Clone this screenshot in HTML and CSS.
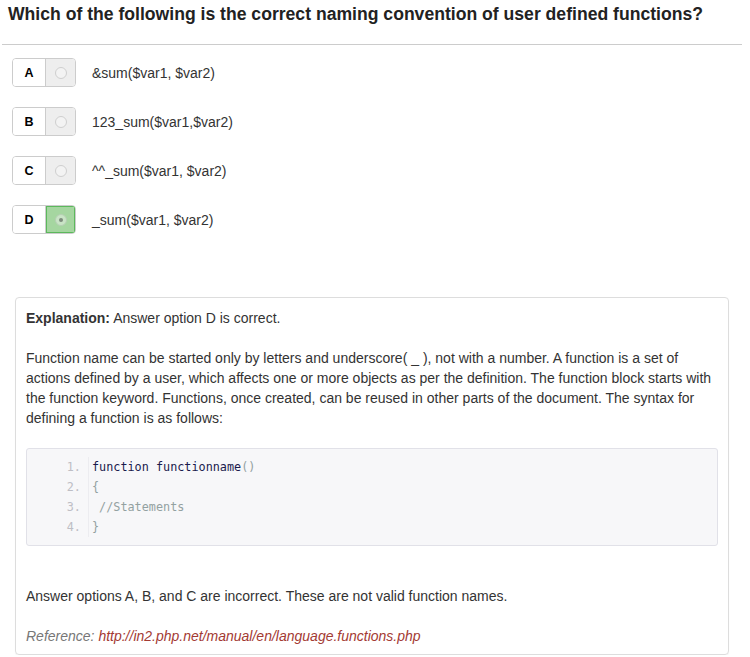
FILE: index.html
```html
<!DOCTYPE html>
<html>
<head>
<meta charset="utf-8">
<link rel="stylesheet" href="styles.css">
</head>
<body>
<div class="page">
  <h3 class="question">Which of the following is the correct naming convention of user defined functions?</h3>
  <hr class="rule">
  <ul class="options">
    <li class="option">
      <span class="btn-group"><span class="letter">A</span><span class="radio-box"><span class="radio"></span></span></span>
      <span class="option-text">&amp;sum($var1, $var2)</span>
    </li>
    <li class="option">
      <span class="btn-group"><span class="letter">B</span><span class="radio-box"><span class="radio"></span></span></span>
      <span class="option-text">123_sum($var1,$var2)</span>
    </li>
    <li class="option">
      <span class="btn-group"><span class="letter">C</span><span class="radio-box"><span class="radio"></span></span></span>
      <span class="option-text">^^_sum($var1, $var2)</span>
    </li>
    <li class="option">
      <span class="btn-group"><span class="letter">D</span><span class="radio-box correct"><span class="radio checked"></span></span></span>
      <span class="option-text">_sum($var1, $var2)</span>
    </li>
  </ul>
  <div class="panel">
    <p><strong>Explanation:</strong> Answer option D is correct.</p>
    <p>Function name can be started only by letters and underscore( _ ), not with a number. A function is a set of actions defined by a user, which affects one or more objects as per the definition. The function block starts with the function keyword. Functions, once created, can be reused in other parts of the document. The syntax for defining a function is as follows:</p>
    <ol class="code">
      <li><span class="kw">function functionname</span><span class="pun">()</span></li>
      <li><span class="pun">{</span></li>
      <li><span class="com">&nbsp;//Statements</span></li>
      <li><span class="pun">}</span></li>
    </ol>
    <p class="after-code">Answer options A, B, and C are incorrect. These are not valid function names.</p>
    <p class="ref"><em>Reference: <a href="#">http://in2.php.net/manual/en/language.functions.php</a></em></p>
  </div>
</div>
</body>
</html>
```

FILE: styles.css
```css
html, body {
  margin: 0;
  padding: 0;
  background: #fff;
}
body {
  font-family: "Liberation Sans", Arial, sans-serif;
  font-size: 14px;
  line-height: 20px;
  color: #333;
}
.page {
  width: 750px;
}
.question {
  margin: 0;
  padding: 3px 0 0 8px;
  font-size: 17.6px;
  line-height: 22px;
  font-weight: bold;
  color: #222;
}
.rule {
  margin: 19px 8px 0 2px;
  border: 0;
  border-top: 1px solid #ccc;
  height: 0;
}
.options {
  list-style: none;
  margin: 13px 0 0 12px;
  padding: 0;
  display: flex;
  flex-direction: column;
  gap: 20px;
}
.option {
  display: flex;
  align-items: center;
  height: 29px;
}
.btn-group {
  display: flex;
  height: 29px;
  box-sizing: border-box;
  border: 1px solid #ccc;
  border-radius: 4px;
  overflow: hidden;
}
.letter {
  width: 32px;
  display: flex;
  align-items: center;
  justify-content: center;
  font-weight: bold;
  font-size: 12.5px;
  color: #000;
  background: #fff;
  border-right: 1px solid #ccc;
}
.radio-box {
  width: 29px;
  display: flex;
  align-items: center;
  justify-content: center;
  background: #eee;
}
.radio-box.correct {
  background: #a5d6a0;
  box-shadow: inset 0 0 0 1px #5cb85c;
}
.radio {
  width: 12px;
  height: 12px;
  box-sizing: border-box;
  border-radius: 50%;
  border: 1px solid #cfcfcf;
  background: #f3f3f3;
  position: relative;
}
.radio.checked {
  border-color: #b6cfb4;
  background: #c9e4c6;
}
.radio.checked::after {
  content: "";
  position: absolute;
  left: 3px;
  top: 3px;
  width: 4px;
  height: 4px;
  border-radius: 50%;
  background: #7d8c7c;
}
.option-text {
  margin-left: 16px;
  font-size: 14px;
  color: #333;
}
.panel {
  margin: 63px 21px 0 15px;
  border: 1px solid #ddd;
  border-radius: 4px;
  padding: 10px 10px 8px 10px;
  box-shadow: 0 1px 1px rgba(0,0,0,0.05);
}
.panel p {
  margin: 0 0 20px 0;
}
.panel p:last-child {
  margin-bottom: 0;
}
.code {
  margin: 0 0 40px 0;
  padding: 8px 0 8px 61px;
  background: #f7f7f9;
  border: 1px solid #e1e1e8;
  border-radius: 3px;
  font-family: "DejaVu Sans Mono", Consolas, monospace;
  font-size: 11.8px;
  line-height: 20px;
  color: #bebec5;
}
.code li {
  padding-left: 3px;
  border-left: 1px solid #ececf0;
}
.kw { color: #1a1a4d; }
.pun { color: #93a1a1; }
.com { color: #93a1a1; }
.ref {
  color: #777;
}
.ref a {
  color: #a33a33;
  text-decoration: none;
}
```
